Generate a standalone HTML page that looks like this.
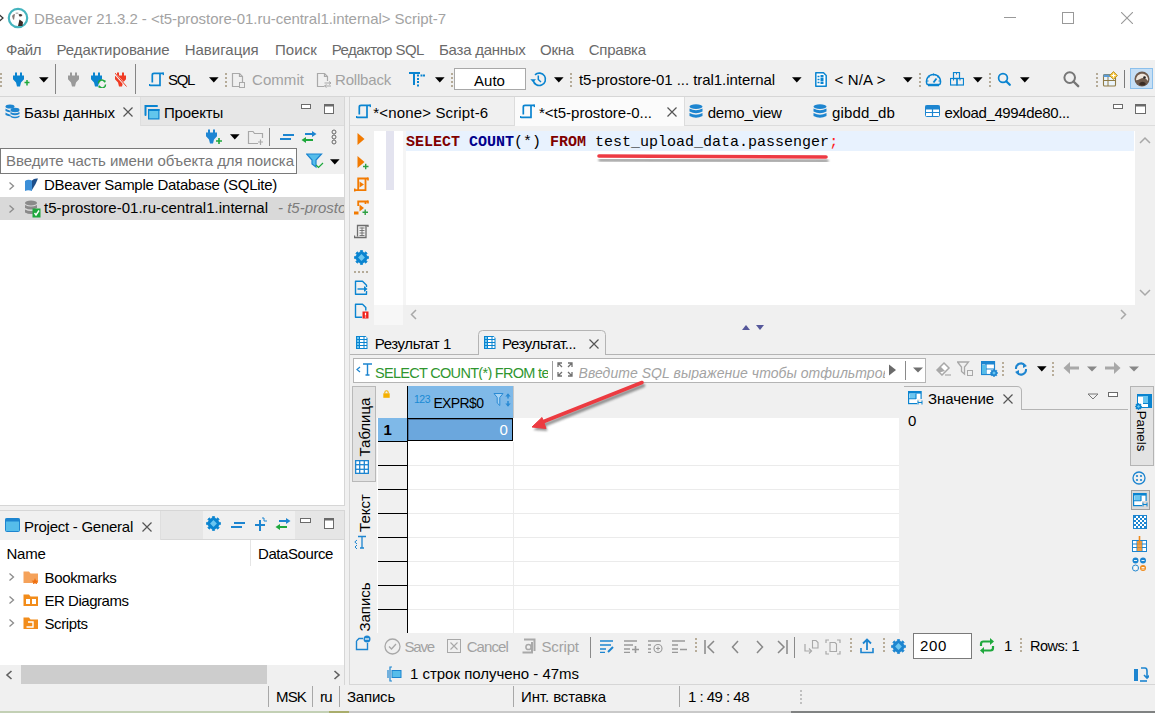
<!DOCTYPE html>
<html><head><meta charset="utf-8"><style>
html,body{margin:0;padding:0;}
body{width:1155px;height:713px;position:relative;overflow:hidden;background:#f0f0f0;font-family:"Liberation Sans",sans-serif;}
body>div,body>svg{position:absolute;}
.t{white-space:nowrap;}
</style></head><body>
<div style="left:0px;top:0px;width:1155px;height:60px;background:#ffffff;"></div>
<svg style="left:0px;top:13px;" width="4" height="10" viewBox="0 0 4 10"><path d="M-1 1.5L3 5L-1 8.5" stroke="#333" stroke-width="1.2" fill="none"/></svg>
<svg style="left:7px;top:7px;" width="22" height="22" viewBox="0 0 22 22"><circle cx="11" cy="11" r="9.2" fill="#ffffff" stroke="#45b4be" stroke-width="2.2"/><path d="M11 19L12.5 12.5L16 15L15.5 19Z" fill="#3a2a26"/><path d="M11.5 7.5Q13.5 6.5 15.5 8Q14.5 10 12.5 9.5Z" fill="#4a3a36"/><path d="M5 9Q6 7 8 7L7 13Q5.5 12 5 9Z" fill="#6a5a56" opacity="0.8"/><path d="M8 6Q10 5 12 6L10 7Z" fill="#777" opacity="0.7"/></svg>
<svg style="left:1004px;top:17px;" width="12" height="1" viewBox="0 0 12 1"><rect width="12" height="1" fill="#999"/></svg>
<svg style="left:1062px;top:12px;" width="12" height="12" viewBox="0 0 12 12"><rect x="0.5" y="0.5" width="11" height="11" fill="none" stroke="#999"/></svg>
<svg style="left:1121px;top:12px;" width="12" height="12" viewBox="0 0 12 12"><path d="M0 0L12 12M12 0L0 12" stroke="#999" stroke-width="1.1"/></svg>
<div style="left:0px;top:96px;width:1155px;height:1px;background:#dadada;"></div>
<svg style="left:0px;top:73px;" width="2" height="16" viewBox="0 0 2 16"><rect x="0" y="0" width="2" height="2" fill="#b5ab98"/><rect x="0" y="4" width="2" height="2" fill="#b5ab98"/><rect x="0" y="8" width="2" height="2" fill="#b5ab98"/><rect x="0" y="12" width="2" height="2" fill="#b5ab98"/></svg>
<svg style="left:13px;top:72px;" width="17" height="16" viewBox="0 0 17 16"><path d="M2 0.5H4V4H2ZM7 0.5H9V4H7Z" fill="#0a84d0"/><path d="M0 3.5H11V7.2L8 10.5L7 14.5H4L3 10.5L0 7.2Z" fill="#0a84d0"/><path d="M12 10.5H16M14 8.5V13M11.5 10.5H16.5M14 8V13.5" stroke="#1ea83c" stroke-width="1.5"/></svg>
<svg style="left:38.7px;top:77px;" width="10" height="6" viewBox="0 0 10 6"><path d="M0 0.3H9.6L4.8 5.5Z" fill="#000"/></svg>
<div style="left:55px;top:64px;width:1px;height:30px;background:#858585;"></div>
<svg style="left:68px;top:72px;" width="17" height="16" viewBox="0 0 17 16"><path d="M2 0.5H4V4H2ZM7 0.5H9V4H7Z" fill="#9a9a9a"/><path d="M0 3.5H11V7.2L8 10.5L7 14.5H4L3 10.5L0 7.2Z" fill="#9a9a9a"/></svg>
<svg style="left:90.5px;top:72px;" width="17" height="16" viewBox="0 0 17 16"><path d="M2 0.5H4V4H2ZM7 0.5H9V4H7Z" fill="#0a84d0"/><path d="M0 3.5H11V7.2L8 10.5L7 14.5H4L3 10.5L0 7.2Z" fill="#0a84d0"/><path d="M7.5 11.5A3.3 3.3 0 0 1 13.5 9.5" stroke="#1ea83c" stroke-width="1.4" fill="none"/><path d="M12 8L15 8.8L13.8 11Z" fill="#1ea83c"/><path d="M14.5 12.5A3.3 3.3 0 0 1 8.5 14.5" stroke="#1ea83c" stroke-width="1.4" fill="none"/><path d="M10 16L7 15.2L8.2 13Z" fill="#1ea83c"/></svg>
<svg style="left:115px;top:72px;" width="17" height="16" viewBox="0 0 17 16"><path d="M2 0.5H4V4H2ZM7 0.5H9V4H7Z" fill="#f03c24"/><path d="M0 3.5H11V7.2L8 10.5L7 14.5H4L3 10.5L0 7.2Z" fill="#f03c24"/><path d="M-1 1L12 15" stroke="#f0f0f0" stroke-width="2"/><path d="M-0.5 0.5L11.5 14.5" stroke="#f03c24" stroke-width="1"/></svg>
<div style="left:135px;top:64px;width:1px;height:30px;background:#858585;"></div>
<svg style="left:149px;top:72px;" width="15" height="15" viewBox="0 0 15 15"><path d="M3.3 10.5V3Q3.3 1.3 5 1.3H14.5" stroke="#0a84d0" stroke-width="1.7" fill="none"/><path d="M11 1.5V13.4H0.8" stroke="#0a84d0" stroke-width="1.7" fill="none"/><path d="M14 0.5L14.5 3M0.5 12V14" stroke="#0a84d0" stroke-width="1.36"/></svg>
<svg style="left:208.5px;top:77px;" width="10" height="6" viewBox="0 0 10 6"><path d="M0 0.3H9.6L4.8 5.5Z" fill="#000"/></svg>
<svg style="left:225px;top:73px;" width="2" height="16" viewBox="0 0 2 16"><rect x="0" y="0" width="2" height="2" fill="#b5ab98"/><rect x="0" y="4" width="2" height="2" fill="#b5ab98"/><rect x="0" y="8" width="2" height="2" fill="#b5ab98"/><rect x="0" y="12" width="2" height="2" fill="#b5ab98"/></svg>
<svg style="left:231px;top:72px;" width="16" height="16" viewBox="0 0 16 16"><path d="M1.5 1.5H8.5L11.5 4.5V14.5H1.5Z" fill="none" stroke="#a9a9a9" stroke-width="1.2"/><path d="M8.5 1.5V4.5H11.5" fill="none" stroke="#a9a9a9" stroke-width="1.2"/><rect x="8.5" y="10.5" width="5" height="5" fill="#f0f0f0" stroke="#a9a9a9"/></svg>
<svg style="left:316px;top:72px;" width="16" height="16" viewBox="0 0 16 16"><path d="M1.5 1.5H8.5L11.5 4.5V14.5H1.5Z" fill="none" stroke="#a9a9a9" stroke-width="1.2"/><path d="M8.5 1.5V4.5H11.5" fill="none" stroke="#a9a9a9" stroke-width="1.2"/><rect x="8" y="9" width="8" height="7" fill="#f0f0f0"/><path d="M8.5 11H15M13 9.5L15 11L13 12.5M15 14H8.5M10.5 12.5L8.5 14L10.5 15.5" stroke="#a9a9a9" stroke-width="1" fill="none"/></svg>
<svg style="left:408px;top:71px;" width="17" height="17" viewBox="0 0 17 17"><path d="M1 2H12M6 2V14" stroke="#0a84d0" stroke-width="2"/><rect x="9" y="3.5" width="2" height="2" fill="#0a84d0"/><rect x="12.5" y="3.5" width="2" height="2" fill="#0a84d0"/><rect x="15" y="3.5" width="2" height="2" fill="#0a84d0"/><rect x="9" y="7" width="2" height="2" fill="#0a84d0"/><rect x="9" y="10" width="2" height="2" fill="#0a84d0"/><rect x="9" y="13.5" width="2" height="2" fill="#0a84d0"/></svg>
<svg style="left:435px;top:77px;" width="10" height="6" viewBox="0 0 10 6"><path d="M0 0.3H9.6L4.8 5.5Z" fill="#000"/></svg>
<svg style="left:451px;top:73px;" width="2" height="16" viewBox="0 0 2 16"><rect x="0" y="0" width="2" height="2" fill="#b5ab98"/><rect x="0" y="4" width="2" height="2" fill="#b5ab98"/><rect x="0" y="8" width="2" height="2" fill="#b5ab98"/><rect x="0" y="12" width="2" height="2" fill="#b5ab98"/></svg>
<div style="left:454px;top:68px;width:72px;height:22px;box-sizing:border-box;border:1px solid #a8a8a8;background:#ffffff;"></div>
<svg style="left:530px;top:71px;" width="17" height="17" viewBox="0 0 17 17"><path d="M3.2 9.5A6.2 6.2 0 1 0 5 3.8" stroke="#0a84d0" stroke-width="1.6" fill="none"/><path d="M0.3 8.3H6L3.2 11.3Z" fill="#0a84d0"/><path d="M8.3 4.5V8.5L11 11" stroke="#0a84d0" stroke-width="1.5" fill="none"/></svg>
<svg style="left:554px;top:77px;" width="10" height="6" viewBox="0 0 10 6"><path d="M0 0.3H9.6L4.8 5.5Z" fill="#000"/></svg>
<svg style="left:570px;top:73px;" width="2" height="16" viewBox="0 0 2 16"><rect x="0" y="0" width="2" height="2" fill="#b5ab98"/><rect x="0" y="4" width="2" height="2" fill="#b5ab98"/><rect x="0" y="8" width="2" height="2" fill="#b5ab98"/><rect x="0" y="12" width="2" height="2" fill="#b5ab98"/></svg>
<svg style="left:792px;top:77px;" width="10" height="6" viewBox="0 0 10 6"><path d="M0 0.3H9.6L4.8 5.5Z" fill="#000"/></svg>
<svg style="left:814px;top:71px;" width="14" height="17" viewBox="0 0 14 17"><path d="M1.8 1.8H9.5L12.2 4.5V15.2H1.8Z" fill="#fff" stroke="#0a84d0" stroke-width="1.5" stroke-linejoin="round"/><path d="M3.5 5.5H5.5M3.5 8.5H5.5M3.5 11.5H5.5" stroke="#0a84d0" stroke-width="1.3"/><rect x="6.5" y="4" width="3" height="2.5" fill="#0a84d0"/><rect x="6.5" y="7" width="3" height="3" fill="#0a84d0"/><rect x="6.5" y="10.5" width="3" height="2.5" fill="#0a84d0"/></svg>
<svg style="left:903px;top:77px;" width="10" height="6" viewBox="0 0 10 6"><path d="M0 0.3H9.6L4.8 5.5Z" fill="#000"/></svg>
<svg style="left:919px;top:73px;" width="2" height="16" viewBox="0 0 2 16"><rect x="0" y="0" width="2" height="2" fill="#b5ab98"/><rect x="0" y="4" width="2" height="2" fill="#b5ab98"/><rect x="0" y="8" width="2" height="2" fill="#b5ab98"/><rect x="0" y="12" width="2" height="2" fill="#b5ab98"/></svg>
<svg style="left:925px;top:72px;" width="17" height="15" viewBox="0 0 17 15"><path d="M2.2 12.5A7 7 0 1 1 14.8 12.5Z" fill="none" stroke="#0a84d0" stroke-width="1.5" stroke-linejoin="round"/><path d="M3 13.5H14" stroke="#0a84d0" stroke-width="1.5"/><path d="M8.5 10.5L11.5 6.5" stroke="#0a84d0" stroke-width="1.8"/><path d="M8.5 1.5V3.5M3.5 4L4.8 5.2M13.5 4L12.2 5.2M1.8 9H3.5M15.2 9H13.5" stroke="#0a84d0" stroke-width="1"/></svg>
<svg style="left:950px;top:72px;" width="14" height="14" viewBox="0 0 14 14"><rect x="3.5" y="0.5" width="6" height="6" fill="none" stroke="#0a84d0" stroke-width="1.2"/><rect x="0.5" y="6.5" width="6.5" height="6.5" fill="none" stroke="#0a84d0" stroke-width="1.2"/><rect x="7" y="6.5" width="6.5" height="6.5" fill="none" stroke="#0a84d0" stroke-width="1.2"/><path d="M6.5 0.5V2.5M3.5 6.5V8.5M10 6.5V8.5" stroke="#0a84d0" stroke-width="1"/></svg>
<svg style="left:972.8px;top:77px;" width="10" height="6" viewBox="0 0 10 6"><path d="M0 0.3H9.6L4.8 5.5Z" fill="#000"/></svg>
<svg style="left:989px;top:73px;" width="2" height="16" viewBox="0 0 2 16"><rect x="0" y="0" width="2" height="2" fill="#b5ab98"/><rect x="0" y="4" width="2" height="2" fill="#b5ab98"/><rect x="0" y="8" width="2" height="2" fill="#b5ab98"/><rect x="0" y="12" width="2" height="2" fill="#b5ab98"/></svg>
<svg style="left:997px;top:72px;" width="14" height="15" viewBox="0 0 14 15"><circle cx="6" cy="6" r="4.4" fill="none" stroke="#0a84d0" stroke-width="1.7"/><path d="M9.2 9.2L12.8 12.8" stroke="#0a84d0" stroke-width="2.2" stroke-linecap="round"/></svg>
<svg style="left:1020px;top:77px;" width="10" height="6" viewBox="0 0 10 6"><path d="M0 0.3H9.6L4.8 5.5Z" fill="#000"/></svg>
<svg style="left:1062px;top:70px;" width="18" height="18" viewBox="0 0 18 18"><circle cx="7.7" cy="7.6" r="5.3" fill="none" stroke="#767676" stroke-width="2"/><path d="M11.5 11.5L16.2 16.2" stroke="#767676" stroke-width="2.4" stroke-linecap="round"/></svg>
<svg style="left:1096px;top:73px;" width="2" height="16" viewBox="0 0 2 16"><rect x="0" y="0" width="2" height="2" fill="#b5ab98"/><rect x="0" y="4" width="2" height="2" fill="#b5ab98"/><rect x="0" y="8" width="2" height="2" fill="#b5ab98"/><rect x="0" y="12" width="2" height="2" fill="#b5ab98"/></svg>
<svg style="left:1102px;top:71px;" width="17" height="16" viewBox="0 0 17 16"><rect x="1.5" y="3.5" width="12" height="11.5" rx="1" fill="#eaf4fb" stroke="#8f7b46" stroke-width="1.1"/><rect x="1.5" y="3.5" width="12" height="2.5" fill="#5b9bd5"/><path d="M1.5 9.5H13.5M6 6V15" stroke="#8f7b46" stroke-width="1"/><path d="M11.5 0.5L15.5 4.5L11.5 8.5L7.5 4.5Z" fill="#f6c53f" stroke="#b08a1e" stroke-width="0.8"/><path d="M11.5 2.5V6.5M9.5 4.5H13.5" stroke="#fff" stroke-width="1"/></svg>
<div style="left:1124px;top:70px;width:1px;height:18px;background:#7a7a7a;"></div>
<div style="left:1130px;top:68px;width:23px;height:21px;box-sizing:border-box;border:1px solid #8cc0ec;background:#c6dff5;"></div>
<svg style="left:1134px;top:71px;" width="16" height="16" viewBox="0 0 16 16"><circle cx="8" cy="8" r="7.5" fill="#6d5a4c"/><path d="M2 9C2.5 4 6 2 10 3C13 4 14.5 7 14 10C12 7 9 6 6 8C4.5 9 3 9.5 2 9Z" fill="#efe6dc"/><path d="M5 13C7 10 10 10 12 13C10 15 7 15 5 13Z" fill="#3a2c24"/><circle cx="10.5" cy="6.5" r="1.3" fill="#222"/></svg>
<div style="left:0px;top:97px;width:344px;height:29px;background:#e6e6e6;"></div>
<div style="left:140px;top:125px;width:204px;height:1px;background:#dcdcdc;"></div>
<div style="left:140px;top:97px;width:1px;height:29px;background:#dedede;"></div>
<div style="left:0px;top:97px;width:140px;height:29px;background:#f0f0f0;"></div>
<div style="left:0px;top:126px;width:344px;height:48px;background:#f0f0f0;"></div>
<div style="left:344px;top:96px;width:1px;height:410px;background:#d6d6d6;"></div>
<div style="left:0px;top:96px;width:345px;height:1px;background:#d6d6d6;"></div>
<svg style="left:5px;top:104px;" width="15" height="15" viewBox="0 0 15 15"><g fill="#1d85d0"><ellipse cx="5" cy="2.5" rx="4.5" ry="2"/><ellipse cx="10" cy="6" rx="4.5" ry="2.2"/><path d="M0.5 4.5Q5 7 5.5 6.5V8Q5 9 0.5 7Z"/><path d="M0.5 8.5Q5 11 5.5 10.5V12Q5 13 0.5 11Z"/><path d="M5.5 8Q10 10.5 14.5 8V10Q10 12.5 5.5 10Z"/><path d="M5.5 11.5Q10 14 14.5 11.5V13Q10 15.5 5.5 13Z"/></g></svg>
<svg style="left:123px;top:107px;" width="10" height="10" viewBox="0 0 10 10"><path d="M0.5 0.5L9.5 9.5M9.5 0.5L0.5 9.5" stroke="#555" stroke-width="1.2"/></svg>
<svg style="left:144px;top:104px;" width="16" height="16" viewBox="0 0 16 16"><path d="M1.5 11V2H13" stroke="#0a84d0" stroke-width="2" fill="none" stroke-linecap="round"/><rect x="4.6" y="5.6" width="10.3" height="9.3" fill="#62c6ec" stroke="#0a84d0" stroke-width="1.2"/><rect x="4" y="5" width="11.5" height="2" fill="#0a84d0"/></svg>
<svg style="left:301px;top:104px;" width="10" height="5" viewBox="0 0 10 5"><rect x="0.5" y="0.5" width="9" height="4" fill="#fff" stroke="#6b6b6b"/></svg>
<svg style="left:324px;top:104px;" width="10" height="10" viewBox="0 0 10 10"><rect x="0.5" y="0.5" width="9" height="9" fill="#fff" stroke="#6b6b6b"/><rect x="0.5" y="0.5" width="9" height="2" fill="#6b6b6b"/></svg>
<svg style="left:206px;top:129px;" width="17" height="16" viewBox="0 0 17 16"><path d="M2 0.5H4V4H2ZM7 0.5H9V4H7Z" fill="#1f86d3"/><path d="M0 3.5H11V7.2L8 10.5L7 14.5H4L3 10.5L0 7.2Z" fill="#1f86d3"/><path d="M10 12H16M13 9V15" stroke="#1ea83c" stroke-width="1.6"/></svg>
<svg style="left:229.5px;top:134px;" width="10" height="6" viewBox="0 0 10 6"><path d="M0 0.3H9.6L4.8 5.5Z" fill="#000"/></svg>
<svg style="left:247px;top:130px;" width="17" height="15" viewBox="0 0 17 15"><path d="M1.5 3V13.5H11M1.5 3V1.5H6L7.5 3.5H15.5V8" fill="none" stroke="#a8a8a8" stroke-width="1.2"/><path d="M11 12H16M13.5 9.5V15" stroke="#a8a8a8" stroke-width="1.2"/></svg>
<div style="left:269px;top:128px;width:1px;height:18px;background:#8a8a8a;"></div>
<svg style="left:280px;top:134px;" width="14" height="6" viewBox="0 0 14 6"><path d="M3 1H14M0 5H11" stroke="#1d85d0" stroke-width="1.8"/></svg>
<svg style="left:301px;top:131px;" width="16" height="12" viewBox="0 0 16 12"><path d="M4 3H14" stroke="#1d85d0" stroke-width="2"/><path d="M11 0L15.5 3L11 6Z" fill="#1d85d0"/><path d="M2 9H12" stroke="#1ea83c" stroke-width="2"/><path d="M5 6L0.5 9L5 12Z" fill="#1ea83c"/></svg>
<svg style="left:331px;top:129px;" width="6" height="16" viewBox="0 0 6 16"><circle cx="3" cy="3" r="2" fill="none" stroke="#666" stroke-width="1"/><circle cx="3" cy="8" r="2" fill="none" stroke="#666" stroke-width="1"/><circle cx="3" cy="13" r="2" fill="none" stroke="#666" stroke-width="1"/></svg>
<div style="left:0px;top:148px;width:297px;height:26px;box-sizing:border-box;border:1px solid #7a7a7a;background:#ffffff;"></div>
<svg style="left:306px;top:153px;" width="18" height="16" viewBox="0 0 18 16"><path d="M0.5 1H15.5L10 7V14L6 11V7Z" fill="#56bdea" stroke="#1d85d0" stroke-width="1.2"/><path d="M10 12L12.5 14.5L17 10" stroke="#1ea83c" stroke-width="1.2" fill="none"/></svg>
<svg style="left:330px;top:159px;" width="10" height="6" viewBox="0 0 10 6"><path d="M0 0.3H9.6L4.8 5.5Z" fill="#000"/></svg>
<div style="left:0px;top:174px;width:344px;height:331px;background:#ffffff;"></div>
<div style="left:0px;top:197px;width:344px;height:23px;background:#d9d9d9;"></div>
<svg style="left:8px;top:181px;" width="7" height="10" viewBox="0 0 7 10"><path d="M1.5 1.5L5.5 5L1.5 8.5" stroke="#8c8c8c" stroke-width="1.3" fill="none"/></svg>
<svg style="left:24px;top:178px;" width="15" height="14" viewBox="0 0 15 14"><path d="M1 3Q4 1 8 2.5V13Q4 11.5 1 13Z" fill="#3c8fd8"/><path d="M8 2.5Q10 0 14 0.5Q12 6 8 12Z" fill="#1e4f8a"/></svg>
<svg style="left:8px;top:204px;" width="7" height="10" viewBox="0 0 7 10"><path d="M1.5 1.5L5.5 5L1.5 8.5" stroke="#8c8c8c" stroke-width="1.3" fill="none"/></svg>
<svg style="left:24px;top:200px;" width="17" height="18" viewBox="0 0 17 18"><g fill="#8a8a8a"><ellipse cx="7" cy="3" rx="6" ry="2.5"/><path d="M1 5Q7 8 13 5V8Q7 11 1 8Z"/><path d="M1 9.5Q7 12.5 13 9.5V12.5Q7 15.5 1 12.5Z"/></g><rect x="8.5" y="8.5" width="8" height="9" fill="#1ea83c"/><path d="M10.5 13L12 15L15 10.5" stroke="#fff" stroke-width="1.4" fill="none"/></svg>
<div style="left:0px;top:505px;width:345px;height:1px;background:#d6d6d6;"></div>
<div style="left:0px;top:510px;width:345px;height:1px;background:#d6d6d6;"></div>
<div style="left:344px;top:510px;width:1px;height:175px;background:#d6d6d6;"></div>
<div style="left:0px;top:511px;width:344px;height:29px;background:#e6e6e6;"></div>
<div style="left:0px;top:511px;width:160px;height:29px;background:#f0f0f0;"></div>
<div style="left:203px;top:511px;width:92px;height:29px;background:#f0f0f0;"></div>
<div style="left:160px;top:539px;width:184px;height:1px;background:#d8d8d8;"></div>
<div style="left:160px;top:511px;width:1px;height:29px;background:#dedede;"></div>
<svg style="left:5px;top:518px;" width="15" height="14" viewBox="0 0 15 14"><rect x="0.5" y="0.5" width="14" height="13" rx="1" fill="#56bdea" stroke="#1d85d0" stroke-width="1"/><rect x="0.5" y="0.5" width="14" height="3" fill="#1d85d0"/></svg>
<svg style="left:142px;top:522px;" width="10" height="10" viewBox="0 0 10 10"><path d="M0.5 0.5L9.5 9.5M9.5 0.5L0.5 9.5" stroke="#555" stroke-width="1.2"/></svg>
<svg style="left:206px;top:515.5px;" width="15" height="15" viewBox="0 0 15 15"><polygon points="12.75,6.24 14.47,6.45 14.47,8.55 12.75,8.76 12.10,10.32 13.17,11.69 11.69,13.17 10.32,12.10 8.76,12.75 8.55,14.47 6.45,14.47 6.24,12.75 4.68,12.10 3.31,13.17 1.83,11.69 2.90,10.32 2.25,8.76 0.53,8.55 0.53,6.45 2.25,6.24 2.90,4.68 1.83,3.31 3.31,1.83 4.68,2.90 6.24,2.25 6.45,0.53 8.55,0.53 8.76,2.25 10.32,2.90 11.69,1.83 13.17,3.31 12.10,4.68" fill="#0a84d0" stroke="#0a84d0" stroke-width="0.75" stroke-linejoin="round"/><circle cx="7.5" cy="7.5" r="5.29" fill="#0a84d0"/><rect x="5.10" y="5.10" width="4.80" height="4.80" fill="#6cc6f0" transform="rotate(45 7.5 7.5)"/></svg>
<svg style="left:231px;top:522px;" width="14" height="6" viewBox="0 0 14 6"><path d="M3 1H14M0 5H11" stroke="#1d85d0" stroke-width="1.8"/></svg>
<svg style="left:255px;top:517px;" width="13" height="14" viewBox="0 0 13 14"><path d="M0 8H10M5 3V14" stroke="#1d85d0" stroke-width="2"/><path d="M7 1H9V4H12" stroke="#1d85d0" stroke-width="1" fill="none"/></svg>
<svg style="left:275px;top:518px;" width="16" height="12" viewBox="0 0 16 12"><path d="M4 3H14" stroke="#1d85d0" stroke-width="2"/><path d="M11 0L15.5 3L11 6Z" fill="#1d85d0"/><path d="M2 9H12" stroke="#1ea83c" stroke-width="2"/><path d="M5 6L0.5 9L5 12Z" fill="#1ea83c"/></svg>
<svg style="left:300px;top:518px;" width="11" height="5" viewBox="0 0 11 5"><rect x="0.5" y="0.5" width="10" height="4" fill="#fff" stroke="#6b6b6b"/></svg>
<svg style="left:324px;top:518px;" width="10" height="11" viewBox="0 0 10 11"><rect x="0.5" y="0.5" width="9" height="10" fill="#fff" stroke="#6b6b6b"/><rect x="0.5" y="0.5" width="9" height="2" fill="#6b6b6b"/></svg>
<div style="left:0px;top:540px;width:344px;height:125px;background:#ffffff;"></div>
<div style="left:250px;top:540px;width:1px;height:26px;background:#e5e5e5;"></div>
<svg style="left:8px;top:572px;" width="7" height="10" viewBox="0 0 7 10"><path d="M1.5 1.5L5.5 5L1.5 8.5" stroke="#8c8c8c" stroke-width="1.3" fill="none"/></svg>
<svg style="left:23px;top:570px;" width="16" height="14" viewBox="0 0 16 14"><path d="M0.5 1.5H6L7.5 3.5H15V13H0.5Z" fill="#f5a25a"/><path d="M12 8L13 10.5L15.5 10.7L13.6 12.2L14.2 14.5L12 13.2L9.8 14.5L10.4 12.2L8.5 10.7L11 10.5Z" fill="#f07010"/></svg>
<svg style="left:8px;top:595px;" width="7" height="10" viewBox="0 0 7 10"><path d="M1.5 1.5L5.5 5L1.5 8.5" stroke="#8c8c8c" stroke-width="1.3" fill="none"/></svg>
<svg style="left:23px;top:593px;" width="16" height="14" viewBox="0 0 16 14"><path d="M0.5 1.5H6L7.5 3.5H15V13H0.5Z" fill="#f28c1a"/><rect x="3" y="6" width="4" height="5" fill="#fff"/><rect x="9" y="6" width="4" height="5" fill="#fff"/></svg>
<svg style="left:8px;top:618px;" width="7" height="10" viewBox="0 0 7 10"><path d="M1.5 1.5L5.5 5L1.5 8.5" stroke="#8c8c8c" stroke-width="1.3" fill="none"/></svg>
<svg style="left:23px;top:616px;" width="16" height="14" viewBox="0 0 16 14"><path d="M0.5 1.5H6L7.5 3.5H15V13H0.5Z" fill="#f28c1a"/><path d="M5 6H10V11H3.5" stroke="#fff" stroke-width="1.4" fill="none"/></svg>
<div style="left:0px;top:665px;width:344px;height:19px;background:#f0f0f0;"></div>
<div style="left:21px;top:665px;width:246px;height:19px;background:#cdcdcd;"></div>
<svg style="left:5px;top:670px;" width="8" height="10" viewBox="0 0 8 10"><path d="M6.5 1L2 5L6.5 9" stroke="#606060" stroke-width="1.6" fill="none"/></svg>
<svg style="left:333px;top:670px;" width="8" height="10" viewBox="0 0 8 10"><path d="M1.5 1L6 5L1.5 9" stroke="#606060" stroke-width="1.6" fill="none"/></svg>
<div style="left:349px;top:96px;width:806px;height:1px;background:#d6d6d6;"></div>
<div style="left:349px;top:96px;width:1px;height:589px;background:#d6d6d6;"></div>
<div style="left:350px;top:97px;width:805px;height:28px;background:#f0f0f0;"></div>
<div style="left:350px;top:125px;width:805px;height:1px;background:#dcdcdc;"></div>
<div style="left:515px;top:97px;width:170px;height:29px;background:#fbfbfb;"></div>
<div style="left:514px;top:97px;width:1px;height:29px;background:#dcdcdc;"></div>
<div style="left:684px;top:97px;width:1px;height:29px;background:#dcdcdc;"></div>
<svg style="left:356px;top:104px;" width="15" height="15" viewBox="0 0 15 15"><path d="M3.3 10.5V3Q3.3 1.3 5 1.3H14.5" stroke="#0a84d0" stroke-width="1.7" fill="none"/><path d="M11 1.5V13.4H0.8" stroke="#0a84d0" stroke-width="1.7" fill="none"/><path d="M14 0.5L14.5 3M0.5 12V14" stroke="#0a84d0" stroke-width="1.36"/></svg>
<svg style="left:520px;top:104px;" width="15" height="15" viewBox="0 0 15 15"><path d="M3.3 10.5V3Q3.3 1.3 5 1.3H14.5" stroke="#0a84d0" stroke-width="1.7" fill="none"/><path d="M11 1.5V13.4H0.8" stroke="#0a84d0" stroke-width="1.7" fill="none"/><path d="M14 0.5L14.5 3M0.5 12V14" stroke="#0a84d0" stroke-width="1.36"/></svg>
<svg style="left:667px;top:107px;" width="10" height="10" viewBox="0 0 10 10"><path d="M0.5 0.5L9.5 9.5M9.5 0.5L0.5 9.5" stroke="#555" stroke-width="1.2"/></svg>
<svg style="left:689px;top:104px;" width="14" height="15" viewBox="0 0 14 15"><g fill="#1d85d0"><ellipse cx="7" cy="2.6" rx="6.5" ry="2.4"/><path d="M0.5 4.5Q7 8 13.5 4.5V7.5Q7 11 0.5 7.5Z"/><path d="M0.5 9Q7 12.5 13.5 9V12Q7 15.5 0.5 12Z"/></g></svg>
<svg style="left:813px;top:104px;" width="14" height="15" viewBox="0 0 14 15"><g fill="#1d85d0"><ellipse cx="7" cy="2.6" rx="6.5" ry="2.4"/><path d="M0.5 4.5Q7 8 13.5 4.5V7.5Q7 11 0.5 7.5Z"/><path d="M0.5 9Q7 12.5 13.5 9V12Q7 15.5 0.5 12Z"/></g></svg>
<svg style="left:925px;top:105px;" width="15" height="12" viewBox="0 0 15 12"><rect x="0.5" y="0.5" width="14" height="11" rx="1" fill="#fff" stroke="#1d85d0" stroke-width="1"/><rect x="0.5" y="0.5" width="14" height="4" fill="#1d85d0"/><path d="M7.5 4V11M1 7.5H14" stroke="#1d85d0" stroke-width="1.2"/></svg>
<svg style="left:1113px;top:104px;" width="10" height="5" viewBox="0 0 10 5"><rect x="0.5" y="0.5" width="9" height="4" fill="#fff" stroke="#6b6b6b"/></svg>
<svg style="left:1135px;top:104px;" width="11" height="10" viewBox="0 0 11 10"><rect x="0.5" y="0.5" width="10" height="9" fill="#fff" stroke="#6b6b6b"/><rect x="0.5" y="0.5" width="10" height="2" fill="#6b6b6b"/></svg>
<div style="left:350px;top:126px;width:24px;height:205px;background:#f0f0f0;"></div>
<div style="left:350px;top:126px;width:805px;height:5px;background:#f0f0f0;"></div>
<div style="left:374px;top:131px;width:761px;height:174px;background:#ffffff;"></div>
<div style="left:386px;top:131px;width:8px;height:59px;background:#e3e3ef;"></div>
<div style="left:403px;top:131px;width:3px;height:174px;background:#f5f5f5;"></div>
<div style="left:406px;top:131px;width:728px;height:20px;background:#e8f2fe;"></div>
<div style="left:1135px;top:126px;width:20px;height:179px;background:#f0f0f0;"></div>
<div style="left:374px;top:305px;width:29px;height:20px;background:#f7f7f7;"></div>
<svg style="left:1139px;top:136px;" width="12" height="8" viewBox="0 0 12 8"><path d="M1 7L6 2L11 7" stroke="#a8a8a8" stroke-width="1.5" fill="none"/></svg>
<svg style="left:1139px;top:289px;" width="12" height="8" viewBox="0 0 12 8"><path d="M1 1L6 6L11 1" stroke="#a8a8a8" stroke-width="1.5" fill="none"/></svg>
<svg style="left:410px;top:309px;" width="8" height="11" viewBox="0 0 8 11"><path d="M6 1L1.5 5.5L6 10" stroke="#a8a8a8" stroke-width="1.5" fill="none"/></svg>
<svg style="left:1119px;top:309px;" width="8" height="11" viewBox="0 0 8 11"><path d="M2 1L6.5 5.5L2 10" stroke="#a8a8a8" stroke-width="1.5" fill="none"/></svg>
<div class="t" style="left:406px;top:135px;font-family:'Liberation Mono';font-size:15px;line-height:15px;color:#000"><b style="color:#800000">SELECT</b> <b style="color:#00008b">COUNT</b>(*) <b style="color:#800000">FROM</b> test_upload_data.passenger<span style="color:#ff2020">;</span></div>
<svg style="left:592px;top:149px;" width="242" height="16" viewBox="0 0 242 16"><defs><filter id="blr2" x="-10%" y="-100%" width="120%" height="300%"><feGaussianBlur stdDeviation="1.2"/></filter></defs><path d="M7 8.5Q120 9.5 234 9.5" stroke="#444" stroke-width="3.5" stroke-linecap="round" fill="none" opacity="0.5" filter="url(#blr2)" transform="translate(1,2.5)"/><path d="M7 7Q120 8 234 8" stroke="#ee3a43" stroke-width="3.6" stroke-linecap="round" fill="none"/></svg>
<svg style="left:357px;top:133px;" width="8" height="12" viewBox="0 0 8 12"><path d="M0.5 0L7.5 6L0.5 12Z" fill="#f27a00"/></svg>
<svg style="left:357px;top:156px;" width="12" height="14" viewBox="0 0 12 14"><path d="M0.5 0L7.5 6L0.5 12Z" fill="#f27a00"/><path d="M6 10.5H11.5M8.7 7.7V13.3" stroke="#2ea043" stroke-width="1.4"/></svg>
<svg style="left:354px;top:177px;" width="15" height="15" viewBox="0 0 15 15"><path d="M4.2 13V1.5H14" stroke="#f27a00" stroke-width="1.8" fill="none"/><path d="M11.5 1.5V13.2H0.5" stroke="#f27a00" stroke-width="1.8" fill="none"/><path d="M14 0.5V3.5M0.7 11.5V14.5" stroke="#f27a00" stroke-width="1.6"/><path d="M5.5 4.5L10 7.5L5.5 10.5Z" fill="#f27a00"/></svg>
<svg style="left:354px;top:200px;" width="15" height="16" viewBox="0 0 15 16"><path d="M4.2 6V1.5H14" stroke="#f27a00" stroke-width="1.8" fill="none"/><path d="M11.5 1.5V4" stroke="#f27a00" stroke-width="1.8" fill="none"/><path d="M14 0.5V3.5" stroke="#f27a00" stroke-width="1.6"/><rect x="0" y="11.5" width="4.5" height="3" fill="#f27a00"/><path d="M5.5 4.5L10 8L5.5 11.5Z" fill="#f27a00"/><path d="M8.5 12.3H14M11.2 9.5V15" stroke="#2ea043" stroke-width="1.4"/></svg>
<svg style="left:354px;top:224px;" width="15" height="15" viewBox="0 0 15 15"><path d="M3.5 12.5V1.5H14V3" stroke="#6e6e6e" stroke-width="1.3" fill="none"/><path d="M12 1.5V13.5H0.5V11.5" stroke="#6e6e6e" stroke-width="1.3" fill="none"/><path d="M5.5 4H10.5M5.5 6.5H10.5M5.5 9H10.5M5.5 11.5H10.5M8 3.5V12" stroke="#6e6e6e" stroke-width="0.9"/></svg>
<svg style="left:354px;top:249.5px;" width="15" height="15" viewBox="0 0 15 15"><polygon points="12.75,6.24 14.47,6.45 14.47,8.55 12.75,8.76 12.10,10.32 13.17,11.69 11.69,13.17 10.32,12.10 8.76,12.75 8.55,14.47 6.45,14.47 6.24,12.75 4.68,12.10 3.31,13.17 1.83,11.69 2.90,10.32 2.25,8.76 0.53,8.55 0.53,6.45 2.25,6.24 2.90,4.68 1.83,3.31 3.31,1.83 4.68,2.90 6.24,2.25 6.45,0.53 8.55,0.53 8.76,2.25 10.32,2.90 11.69,1.83 13.17,3.31 12.10,4.68" fill="#0a84d0" stroke="#0a84d0" stroke-width="0.75" stroke-linejoin="round"/><circle cx="7.5" cy="7.5" r="5.29" fill="#0a84d0"/><rect x="5.10" y="5.10" width="4.80" height="4.80" fill="#6cc6f0" transform="rotate(45 7.5 7.5)"/></svg>
<svg style="left:354px;top:271px;" width="15" height="2" viewBox="0 0 15 2"><rect x="0" y="0" width="2" height="2" fill="#b5ab98"/><rect x="4" y="0" width="2" height="2" fill="#b5ab98"/><rect x="8" y="0" width="2" height="2" fill="#b5ab98"/><rect x="12" y="0" width="2" height="2" fill="#b5ab98"/></svg>
<svg style="left:354px;top:280px;" width="15" height="16" viewBox="0 0 15 16"><path d="M12.5 7V5.2L8.5 1.2H1.5V14.3H12.5V11" fill="none" stroke="#0a84d0" stroke-width="1.4" stroke-linejoin="round"/><path d="M3.5 9H12" stroke="#0a84d0" stroke-width="1.4"/><path d="M10 6L13.5 9L10 12Z" fill="#0a84d0"/></svg>
<svg style="left:354px;top:303px;" width="15" height="16" viewBox="0 0 15 16"><path d="M8 14.3H1.5V1.2H8.5L11.8 4.5V7.5" fill="none" stroke="#0a84d0" stroke-width="1.4" stroke-linejoin="round"/><rect x="8.5" y="8.5" width="6" height="7" fill="#f0201a"/><path d="M11.5 9.8V12.5M11.5 13.5V14.5" stroke="#fff" stroke-width="1.3"/></svg>
<svg style="left:742px;top:325px;" width="8" height="5" viewBox="0 0 8 5"><path d="M0 5L4 0L8 5Z" fill="#55579a"/></svg>
<svg style="left:756px;top:325px;" width="8" height="5" viewBox="0 0 8 5"><path d="M0 0H8L4 5Z" fill="#55579a"/></svg>
<svg style="left:356px;top:336px;" width="12" height="14" viewBox="0 0 12 14"><path d="M0 0H9.5L11.5 2V13H0Z" fill="#0a84d0"/><rect x="1" y="1" width="2" height="2" fill="#6cc6f0"/><rect x="4" y="1" width="3.5" height="2" fill="#fff"/><rect x="8.5" y="1" width="2" height="2" fill="#fff"/><rect x="1" y="4" width="2" height="2" fill="#6cc6f0"/><rect x="4" y="4" width="3.5" height="2" fill="#fff"/><rect x="8.5" y="4" width="2" height="2" fill="#fff"/><rect x="1" y="7" width="2" height="2" fill="#6cc6f0"/><rect x="4" y="7" width="3.5" height="2" fill="#fff"/><rect x="8.5" y="7" width="2" height="2" fill="#fff"/><rect x="1" y="10" width="2" height="2" fill="#6cc6f0"/><rect x="4" y="10" width="3.5" height="2" fill="#fff"/><rect x="8.5" y="10" width="2" height="2" fill="#fff"/></svg>
<svg style="left:477px;top:329px;" width="130" height="26" viewBox="0 0 130 26"><path d="M1.5 26V5.5Q1.5 1.5 5.5 1.5H124.5Q128.5 1.5 128.5 5.5V26" fill="#f0f0f0" stroke="#b4b4b4" stroke-width="1"/></svg>
<svg style="left:484px;top:336px;" width="12" height="14" viewBox="0 0 12 14"><path d="M0 0H9.5L11.5 2V13H0Z" fill="#0a84d0"/><rect x="1" y="1" width="2" height="2" fill="#6cc6f0"/><rect x="4" y="1" width="3.5" height="2" fill="#fff"/><rect x="8.5" y="1" width="2" height="2" fill="#fff"/><rect x="1" y="4" width="2" height="2" fill="#6cc6f0"/><rect x="4" y="4" width="3.5" height="2" fill="#fff"/><rect x="8.5" y="4" width="2" height="2" fill="#fff"/><rect x="1" y="7" width="2" height="2" fill="#6cc6f0"/><rect x="4" y="7" width="3.5" height="2" fill="#fff"/><rect x="8.5" y="7" width="2" height="2" fill="#fff"/><rect x="1" y="10" width="2" height="2" fill="#6cc6f0"/><rect x="4" y="10" width="3.5" height="2" fill="#fff"/><rect x="8.5" y="10" width="2" height="2" fill="#fff"/></svg>
<svg style="left:589px;top:339px;" width="10" height="10" viewBox="0 0 10 10"><path d="M0.5 0.5L9.5 9.5M9.5 0.5L0.5 9.5" stroke="#555" stroke-width="1.2"/></svg>
<div style="left:350px;top:354px;width:128px;height:1px;background:#b4b4b4;"></div>
<div style="left:606px;top:354px;width:549px;height:1px;background:#b4b4b4;"></div>
<div style="left:353px;top:358px;width:573px;height:25px;box-sizing:border-box;border:1px solid #b4b4b4;background:#ffffff;"></div>
<svg style="left:356px;top:362px;" width="17" height="14" viewBox="0 0 17 14"><path d="M4 5L1 7.5L4 10" stroke="#1d85d0" stroke-width="1.2" fill="none"/><path d="M7 2H16M11.5 2V13M9.5 13H13.5" stroke="#1d85d0" stroke-width="1.4"/></svg>
<div style="left:552px;top:361px;width:1px;height:19px;background:#a0a0a0;"></div>
<svg style="left:557px;top:362px;" width="16" height="15" viewBox="0 0 16 15"><path d="M1 5V1H5M1 1L5 5M15 5V1H11M15 1L11 5M1 10V14H5M1 14L5 10M15 10V14H11M15 14L11 10" stroke="#707070" stroke-width="1.3" fill="none"/></svg>
<svg style="left:888px;top:363px;" width="9" height="14" viewBox="0 0 9 14"><path d="M1 1.5L8 7L1 12.5Z" fill="#6a6a6a"/></svg>
<div style="left:905px;top:361px;width:1px;height:19px;background:#8a8a8a;"></div>
<svg style="left:913px;top:367px;" width="10" height="6" viewBox="0 0 10 6"><path d="M0 0.5H10L5 5.5Z" fill="#707070"/></svg>
<svg style="left:935px;top:361px;" width="17" height="15" viewBox="0 0 17 15"><path d="M2 9L9 2L14 7L7 14Z" fill="#fff" stroke="#a8a8a8" stroke-width="1.5"/><path d="M4.5 11.5L2 9L5.5 5.5L10 10Z" fill="#a8a8a8"/><path d="M10 14H16" stroke="#a8a8a8" stroke-width="1.2"/></svg>
<svg style="left:957px;top:361px;" width="16" height="15" viewBox="0 0 16 15"><path d="M0.5 1H11.5L7.5 6V13L4.5 10.5V6Z" fill="none" stroke="#a8a8a8" stroke-width="1.3"/><rect x="10.5" y="9.5" width="5" height="5" fill="none" stroke="#a8a8a8"/></svg>
<svg style="left:981px;top:361px;" width="18" height="16" viewBox="0 0 18 16"><rect x="0.5" y="0.5" width="13" height="13" fill="#fff" stroke="#1d85d0" stroke-width="1.2"/><rect x="0.5" y="0.5" width="13" height="3" fill="#1d85d0"/><path d="M5 0V14M0 8H14" stroke="#1d85d0" stroke-width="1.2"/><rect x="1" y="4" width="4" height="9" fill="#56bdea"/></svg>
<svg style="left:990px;top:369px;" width="8" height="8" viewBox="0 0 8 8"><polygon points="6.80,3.33 7.72,3.44 7.72,4.56 6.80,4.67 6.46,5.50 7.02,6.23 6.23,7.02 5.50,6.46 4.67,6.80 4.56,7.72 3.44,7.72 3.33,6.80 2.50,6.46 1.77,7.02 0.98,6.23 1.54,5.50 1.20,4.67 0.28,4.56 0.28,3.44 1.20,3.33 1.54,2.50 0.98,1.77 1.77,0.98 2.50,1.54 3.33,1.20 3.44,0.28 4.56,0.28 4.67,1.20 5.50,1.54 6.23,0.98 7.02,1.77 6.46,2.50" fill="#1d85d0" stroke="#1d85d0" stroke-width="0.40" stroke-linejoin="round"/><circle cx="4.0" cy="4.0" r="2.82" fill="#1d85d0"/><rect x="2.72" y="2.72" width="2.56" height="2.56" fill="#6cc6f0" transform="rotate(45 4.0 4.0)"/></svg>
<svg style="left:1002px;top:362px;" width="2" height="16" viewBox="0 0 2 16"><rect x="0" y="0" width="2" height="2" fill="#b8ad9a"/><rect x="0" y="4" width="2" height="2" fill="#b8ad9a"/><rect x="0" y="8" width="2" height="2" fill="#b8ad9a"/><rect x="0" y="12" width="2" height="2" fill="#b8ad9a"/></svg>
<svg style="left:1013px;top:361px;" width="16" height="16" viewBox="0 0 16 16"><path d="M3 8A5 5 0 0 1 12 4.5M13 8A5 5 0 0 1 4 11.5" stroke="#1d85d0" stroke-width="2" fill="none"/><path d="M10 2L14 5L10 7Z" fill="#1d85d0"/><path d="M6 9L2 11L6 14Z" fill="#1d85d0"/></svg>
<svg style="left:1037px;top:366px;" width="10" height="6" viewBox="0 0 10 6"><path d="M0 0.3H9.6L4.8 5.5Z" fill="#000"/></svg>
<svg style="left:1052px;top:362px;" width="2" height="16" viewBox="0 0 2 16"><rect x="0" y="0" width="2" height="2" fill="#b8ad9a"/><rect x="0" y="4" width="2" height="2" fill="#b8ad9a"/><rect x="0" y="8" width="2" height="2" fill="#b8ad9a"/><rect x="0" y="12" width="2" height="2" fill="#b8ad9a"/></svg>
<svg style="left:1063px;top:362px;" width="16" height="12" viewBox="0 0 16 12"><path d="M16 6H5" stroke="#a8a8a8" stroke-width="3"/><path d="M7 0L0.5 6L7 12Z" fill="#a8a8a8"/></svg>
<svg style="left:1087px;top:366px;" width="10" height="6" viewBox="0 0 10 6"><path d="M0 0.5H10L5 5.5Z" fill="#888"/></svg>
<svg style="left:1105px;top:362px;" width="16" height="12" viewBox="0 0 16 12"><path d="M0 6H11" stroke="#a8a8a8" stroke-width="3"/><path d="M9 0L15.5 6L9 12Z" fill="#a8a8a8"/></svg>
<svg style="left:1129px;top:366px;" width="10" height="6" viewBox="0 0 10 6"><path d="M0 0.5H10L5 5.5Z" fill="#888"/></svg>
<div style="left:352px;top:386px;width:24px;height:96px;box-sizing:border-box;border:1px solid #b9b9b9;background:#e3e3e3;"></div>
<div class="t" style="left:364px;top:427px;width:0;height:0;"><div style="position:absolute;left:0;top:0;transform:translate(-50%,-50%) rotate(-90deg);font-size:15px;line-height:15px;white-space:nowrap;letter-spacing:0px">Таблица</div></div>
<svg style="left:355px;top:460px;" width="14" height="14" viewBox="0 0 14 14"><rect x="0.65" y="0.65" width="12.7" height="12.7" fill="#fff" stroke="#1d85d0" stroke-width="1.3"/><path d="M4.7 0V14" stroke="#1d85d0" stroke-width="1.3"/><path d="M9.3 0V14" stroke="#1d85d0" stroke-width="1.3"/><path d="M0 4.7H14" stroke="#1d85d0" stroke-width="1.3"/><path d="M0 9.3H14" stroke="#1d85d0" stroke-width="1.3"/></svg>
<div class="t" style="left:364px;top:512.5px;width:0;height:0;"><div style="position:absolute;left:0;top:0;transform:translate(-50%,-50%) rotate(-90deg);font-size:15px;line-height:15px;white-space:nowrap">Текст</div></div>
<svg style="left:354px;top:535px;" width="13" height="15" viewBox="0 0 13 15"><path d="M4 1.5H12M8 1.5V13M6 13H10" stroke="#1d85d0" stroke-width="1.3"/><path d="M3 5L0.8 7L3 9M3 10L1 12L3 14" stroke="#1d85d0" stroke-width="1" fill="none"/></svg>
<div class="t" style="left:364px;top:606.5px;width:0;height:0;"><div style="position:absolute;left:0;top:0;transform:translate(-50%,-50%) rotate(-90deg);font-size:15px;line-height:15px;white-space:nowrap">Запись</div></div>
<svg style="left:355px;top:635px;" width="16" height="16" viewBox="0 0 16 16"><path d="M1.5 6V14.5H12.5V8M1.5 6L4 3.5H8" stroke="#1d85d0" stroke-width="1.4" fill="none"/><circle cx="12" cy="4" r="3.5" fill="#1d85d0"/><path d="M10 4H14" stroke="#fff" stroke-width="1.2"/></svg>
<div style="left:377px;top:386px;width:522px;height:32px;background:#f0f0f0;"></div>
<div style="left:377px;top:418px;width:522px;height:215px;background:#ffffff;"></div>
<div style="left:378px;top:441px;width:29px;height:192px;background:#f0f0f0;"></div>
<svg style="left:382.5px;top:390px;" width="7" height="8" viewBox="0 0 7 8"><path d="M1.8 3.5V2.5A1.7 1.7 0 0 1 5.2 2.5V3.5" stroke="#f5b000" stroke-width="1.1" fill="none"/><rect x="0.3" y="3.3" width="6.4" height="4.5" fill="#f5b000"/></svg>
<div style="left:408px;top:386px;width:105px;height:32px;background:#7fb9e8;"></div>
<svg style="left:493px;top:392px;" width="19" height="16" viewBox="0 0 19 16"><path d="M1 1.5H10L6.8 5.5V13.5L4.2 11V5.5Z" fill="#a8d4f5" stroke="#2a8ad4" stroke-width="1"/><path d="M15 2V6.5M15 9V14" stroke="#2a8ad4" stroke-width="1.5"/><path d="M12.3 4.5L15 1.3L17.7 4.5Z" fill="#2a8ad4"/><path d="M12.3 11.5L15 14.7L17.7 11.5Z" fill="#2a8ad4"/></svg>
<div style="left:378px;top:418px;width:29px;height:23px;background:#7fb9e8;"></div>
<div style="left:407px;top:418px;width:106px;height:23px;background:#000;"></div>
<div style="left:408px;top:419px;width:104px;height:21px;background:#4a74a0;"></div>
<div style="left:408.6px;top:419.5px;width:103px;height:20px;background:#6ba7dd;"></div>
<div style="left:407px;top:386px;width:1px;height:247px;background:#000;"></div>
<div style="left:408px;top:465px;width:491px;height:1px;background:#ebebeb;"></div>
<div style="left:378px;top:465px;width:29px;height:1px;background:#000;"></div>
<div style="left:408px;top:489px;width:491px;height:1px;background:#ebebeb;"></div>
<div style="left:378px;top:489px;width:29px;height:1px;background:#000;"></div>
<div style="left:408px;top:513px;width:491px;height:1px;background:#ebebeb;"></div>
<div style="left:378px;top:513px;width:29px;height:1px;background:#000;"></div>
<div style="left:408px;top:537px;width:491px;height:1px;background:#ebebeb;"></div>
<div style="left:378px;top:537px;width:29px;height:1px;background:#000;"></div>
<div style="left:408px;top:561px;width:491px;height:1px;background:#ebebeb;"></div>
<div style="left:378px;top:561px;width:29px;height:1px;background:#000;"></div>
<div style="left:408px;top:585px;width:491px;height:1px;background:#ebebeb;"></div>
<div style="left:378px;top:585px;width:29px;height:1px;background:#000;"></div>
<div style="left:408px;top:609px;width:491px;height:1px;background:#ebebeb;"></div>
<div style="left:378px;top:609px;width:29px;height:1px;background:#000;"></div>
<div style="left:378px;top:441px;width:29px;height:1px;background:#000;"></div>
<div style="left:513px;top:442px;width:1px;height:191px;background:#ebebeb;"></div>
<div style="left:513px;top:386px;width:1px;height:32px;background:#c8c8c8;"></div>
<svg style="left:515px;top:372px;" width="140" height="70" viewBox="0 0 140 70"><defs><filter id="blr" x="-20%" y="-50%" width="140%" height="200%"><feGaussianBlur stdDeviation="1.3"/></filter></defs><g transform="translate(1.5,3)" opacity="0.55" filter="url(#blr)"><path d="M127 10.5L25 51" stroke="#444" stroke-width="3.6" stroke-linecap="round"/><path d="M17 55L27.5 45L31 56Z" fill="#444"/></g><path d="M127 10.5L25 51" stroke="#ec3b41" stroke-width="3.6" stroke-linecap="round"/><path d="M17 55L27 45.5L31 56.5Z" fill="#ec3b41" stroke="#ec3b41" stroke-width="1" stroke-linejoin="round"/></svg>
<svg style="left:903px;top:385px;" width="120" height="25" viewBox="0 0 120 25"><path d="M1 1.5H114Q118.5 1.5 118.5 6V24.5" fill="none" stroke="#b4b4b4" stroke-width="1"/></svg>
<div style="left:1021px;top:409px;width:107px;height:1px;background:#b4b4b4;"></div>
<svg style="left:908px;top:391px;" width="15" height="14" viewBox="0 0 15 14"><rect x="0.6" y="0.6" width="12.5" height="12" fill="#fff" stroke="#0a84d0" stroke-width="1.2"/><rect x="0.6" y="0.6" width="12.5" height="2" fill="#0a84d0"/><rect x="1.5" y="2.5" width="6.5" height="5" fill="#6cc6f0"/><path d="M0.6 7.8H8M8 2.5V8" stroke="#0a84d0" stroke-width="1.1"/><rect x="9" y="8" width="6" height="6" fill="#f0f0f0"/><path d="M10 11.5H14M10 9.5V13.5M14 9.5V13.5" stroke="#0a84d0" stroke-width="1"/></svg>
<svg style="left:1003px;top:394px;" width="10" height="10" viewBox="0 0 10 10"><path d="M0.5 0.5L9.5 9.5M9.5 0.5L0.5 9.5" stroke="#555" stroke-width="1.2"/></svg>
<svg style="left:1087px;top:393px;" width="12" height="7" viewBox="0 0 12 7"><path d="M1 1H11L6 6Z" fill="none" stroke="#777" stroke-width="1"/></svg>
<svg style="left:1108px;top:392px;" width="10" height="5" viewBox="0 0 10 5"><rect x="0.5" y="0.5" width="9" height="4" fill="#fff" stroke="#6b6b6b"/></svg>
<div style="left:1130px;top:386px;width:24px;height:80px;box-sizing:border-box;border:1px solid #b4b4b4;background:#e3e3e3;"></div>
<svg style="left:1135px;top:394px;" width="17" height="16" viewBox="0 0 17 16"><rect x="2.5" y="0.5" width="14" height="13" fill="#fff" stroke="#0a84d0" stroke-width="1"/><rect x="2.5" y="0.5" width="14" height="2" fill="#0a84d0"/><rect x="8" y="2" width="5" height="7" fill="#6cc6f0"/><rect x="13" y="2" width="3.5" height="11.5" fill="#0a84d0"/><path d="M8 9.5H16" stroke="#0a84d0" stroke-width="1"/></svg>
<svg style="left:1135px;top:403px;" width="7" height="7" viewBox="0 0 7 7"><polygon points="5.95,2.91 6.75,3.01 6.75,3.99 5.95,4.09 5.65,4.82 6.15,5.45 5.45,6.15 4.82,5.65 4.09,5.95 3.99,6.75 3.01,6.75 2.91,5.95 2.18,5.65 1.55,6.15 0.85,5.45 1.35,4.82 1.05,4.09 0.25,3.99 0.25,3.01 1.05,2.91 1.35,2.18 0.85,1.55 1.55,0.85 2.18,1.35 2.91,1.05 3.01,0.25 3.99,0.25 4.09,1.05 4.82,1.35 5.45,0.85 6.15,1.55 5.65,2.18" fill="#0a84d0" stroke="#0a84d0" stroke-width="0.35" stroke-linejoin="round"/><circle cx="3.5" cy="3.5" r="2.47" fill="#0a84d0"/><rect x="2.38" y="2.38" width="2.24" height="2.24" fill="#6cc6f0" transform="rotate(45 3.5 3.5)"/></svg>
<div class="t" style="left:1141px;top:431px;width:0;height:0;"><div style="position:absolute;left:0;top:0;transform:translate(-50%,-50%) rotate(90deg);font-size:13.3px;line-height:15px;white-space:nowrap">Panels</div></div>
<svg style="left:1132px;top:471px;" width="14" height="14" viewBox="0 0 14 14"><circle cx="7" cy="7" r="6" fill="none" stroke="#1d85d0" stroke-width="1.3"/><circle cx="5" cy="5" r="1.1" fill="#1d85d0"/><circle cx="9" cy="5" r="1.1" fill="#1d85d0"/><circle cx="5" cy="9" r="1.1" fill="#1d85d0"/><circle cx="9" cy="9" r="1.1" fill="#1d85d0"/></svg>
<div style="left:1131px;top:490px;width:19px;height:20px;box-sizing:border-box;border:1px solid #a0a0a0;background:#dadada;"></div>
<svg style="left:1133px;top:493px;" width="15" height="14" viewBox="0 0 15 14"><rect x="0.6" y="0.6" width="12.5" height="12" fill="#fff" stroke="#0a84d0" stroke-width="1.2"/><rect x="0.6" y="0.6" width="12.5" height="2" fill="#0a84d0"/><rect x="1.5" y="2.5" width="6.5" height="5" fill="#6cc6f0"/><path d="M0.6 7.8H8M8 2.5V8" stroke="#0a84d0" stroke-width="1.1"/><rect x="9" y="8" width="6" height="6" fill="#dadada"/><path d="M10 11.5H14M10 9.5V13.5M14 9.5V13.5" stroke="#0a84d0" stroke-width="1"/></svg>
<svg style="left:1133px;top:515px;" width="14" height="14" viewBox="0 0 14 14"><rect x="0.5" y="0.5" width="13" height="13" fill="#fff" stroke="#1d85d0"/><rect x="1" y="1" width="2" height="2" fill="#1d85d0"/><rect x="1" y="5" width="2" height="2" fill="#1d85d0"/><rect x="1" y="9" width="2" height="2" fill="#1d85d0"/><rect x="3" y="3" width="2" height="2" fill="#1d85d0"/><rect x="3" y="7" width="2" height="2" fill="#1d85d0"/><rect x="3" y="11" width="2" height="2" fill="#1d85d0"/><rect x="5" y="1" width="2" height="2" fill="#1d85d0"/><rect x="5" y="5" width="2" height="2" fill="#1d85d0"/><rect x="5" y="9" width="2" height="2" fill="#1d85d0"/><rect x="7" y="3" width="2" height="2" fill="#1d85d0"/><rect x="7" y="7" width="2" height="2" fill="#1d85d0"/><rect x="7" y="11" width="2" height="2" fill="#1d85d0"/><rect x="9" y="1" width="2" height="2" fill="#1d85d0"/><rect x="9" y="5" width="2" height="2" fill="#1d85d0"/><rect x="9" y="9" width="2" height="2" fill="#1d85d0"/><rect x="11" y="3" width="2" height="2" fill="#1d85d0"/><rect x="11" y="7" width="2" height="2" fill="#1d85d0"/><rect x="11" y="11" width="2" height="2" fill="#1d85d0"/></svg>
<svg style="left:1132px;top:536px;" width="15" height="16" viewBox="0 0 15 16"><rect x="0.5" y="4.5" width="14" height="11" fill="#fff" stroke="#1d85d0"/><path d="M0.5 8H14.5M0.5 11.5H14.5M5 4.5V15.5M10 4.5V15.5" stroke="#1d85d0" stroke-width="1"/><path d="M7.5 0V7" stroke="#f08a1a" stroke-width="1.6"/><rect x="5" y="5" width="5" height="10" fill="#f08a1a" opacity="0.8"/></svg>
<svg style="left:1132px;top:557px;" width="15" height="15" viewBox="0 0 15 15"><circle cx="3.5" cy="3.5" r="3" fill="#1d85d0"/><circle cx="11" cy="3.5" r="3" fill="#1d85d0"/><circle cx="3.5" cy="11" r="3" fill="none" stroke="#1d85d0"/><circle cx="11" cy="11" r="3" fill="#f08a1a"/><path d="M2 3.5H5M9.5 3.5H12.5M2 9.5L5 12.5M5 9.5L2 12.5M9.5 10.5H12.5M9.5 12H12.5" stroke="#fff" stroke-width="0.9"/></svg>
<svg style="left:384px;top:638px;" width="17" height="17" viewBox="0 0 17 17"><circle cx="8.5" cy="8.5" r="7.5" fill="none" stroke="#a8a8a8" stroke-width="1.3"/><path d="M5 8.5L7.5 11L12 6" stroke="#a8a8a8" stroke-width="1.3" fill="none"/></svg>
<svg style="left:447px;top:639px;" width="14" height="14" viewBox="0 0 14 14"><rect x="0.5" y="0.5" width="13" height="13" fill="none" stroke="#a8a8a8"/><path d="M3.5 3.5L10.5 10.5M10.5 3.5L3.5 10.5" stroke="#a8a8a8" stroke-width="1.1"/></svg>
<svg style="left:521px;top:638px;" width="16" height="16" viewBox="0 0 16 16"><path d="M3 1.5H13.5V13M1.5 14.5H11V4" stroke="#a8a8a8" stroke-width="2" fill="none"/><circle cx="7.5" cy="9" r="2.6" fill="none" stroke="#a8a8a8" stroke-width="1.5"/></svg>
<div style="left:590px;top:637px;width:1px;height:21px;background:#8a8a8a;"></div>
<svg style="left:600px;top:640px;" width="15" height="13" viewBox="0 0 15 13"><path d="M0 1H13M0 5H11M0 9H6M0 12.5H5" stroke="#1d85d0" stroke-width="1.6"/><path d="M8 12L13 7" stroke="#1d85d0" stroke-width="2"/></svg>
<svg style="left:624px;top:640px;" width="15" height="13" viewBox="0 0 15 13"><path d="M0 1H13M0 5H9M0 9H6M0 12.5H6" stroke="#999" stroke-width="1.6"/><path d="M8 9.5H15M11.5 6V13" stroke="#999" stroke-width="1.6"/></svg>
<svg style="left:648px;top:640px;" width="15" height="13" viewBox="0 0 15 13"><path d="M0 1H13M0 5H3M0 9H3M0 12.5H3" stroke="#999" stroke-width="1.6"/><circle cx="10" cy="8.5" r="4" fill="none" stroke="#999" stroke-width="1.1"/><path d="M8 8.5H12M10 6.5V10.5" stroke="#999" stroke-width="1"/></svg>
<svg style="left:672px;top:640px;" width="15" height="13" viewBox="0 0 15 13"><path d="M0 1H13M0 5H6M0 9H6M0 12.5H6M8 9.5H15" stroke="#999" stroke-width="1.6"/></svg>
<svg style="left:695px;top:638px;" width="2" height="16" viewBox="0 0 2 16"><rect x="0" y="0" width="2" height="2" fill="#b8ad9a"/><rect x="0" y="4" width="2" height="2" fill="#b8ad9a"/><rect x="0" y="8" width="2" height="2" fill="#b8ad9a"/><rect x="0" y="12" width="2" height="2" fill="#b8ad9a"/></svg>
<svg style="left:704px;top:640px;" width="12" height="14" viewBox="0 0 12 14"><path d="M1 0V14" stroke="#888" stroke-width="1.5"/><path d="M10 1L4 7L10 13" stroke="#888" stroke-width="1.5" fill="none"/></svg>
<svg style="left:731px;top:640px;" width="9" height="14" viewBox="0 0 9 14"><path d="M7 1L1.5 7L7 13" stroke="#888" stroke-width="1.5" fill="none"/></svg>
<svg style="left:755px;top:640px;" width="9" height="14" viewBox="0 0 9 14"><path d="M2 1L7.5 7L2 13" stroke="#888" stroke-width="1.5" fill="none"/></svg>
<svg style="left:776px;top:640px;" width="12" height="14" viewBox="0 0 12 14"><path d="M11 0V14" stroke="#888" stroke-width="1.5"/><path d="M2 1L8 7L2 13" stroke="#888" stroke-width="1.5" fill="none"/></svg>
<div style="left:794px;top:637px;width:1px;height:21px;background:#8a8a8a;"></div>
<svg style="left:803px;top:639px;" width="16" height="15" viewBox="0 0 16 15"><path d="M2 5V12H8" stroke="#a8a8a8" stroke-width="1.2" fill="none"/><path d="M6 9.5L8.5 12L6 14.5" stroke="#a8a8a8" stroke-width="1.2" fill="none"/><path d="M9.5 1.5H13L15 3.5V9H9.5Z" fill="none" stroke="#a8a8a8" stroke-width="1.1"/></svg>
<svg style="left:825px;top:639px;" width="16" height="16" viewBox="0 0 16 16"><path d="M1 4V1H4M12 1H15V4M15 12V15H12M4 15H1V12" stroke="#a8a8a8" stroke-width="1.2" fill="none"/><path d="M5 3.5H10L11.5 5V12.5H5Z" fill="none" stroke="#a8a8a8" stroke-width="1.1"/></svg>
<svg style="left:850px;top:638px;" width="2" height="16" viewBox="0 0 2 16"><rect x="0" y="0" width="2" height="2" fill="#b8ad9a"/><rect x="0" y="4" width="2" height="2" fill="#b8ad9a"/><rect x="0" y="8" width="2" height="2" fill="#b8ad9a"/><rect x="0" y="12" width="2" height="2" fill="#b8ad9a"/></svg>
<svg style="left:860px;top:638px;" width="14" height="16" viewBox="0 0 14 16"><path d="M7 12V2M3 5.5L7 1.5L11 5.5" stroke="#1d85d0" stroke-width="1.8" fill="none"/><path d="M1 10V14.5H13V10" stroke="#1d85d0" stroke-width="1.6" fill="none"/></svg>
<svg style="left:883px;top:638px;" width="2" height="16" viewBox="0 0 2 16"><rect x="0" y="0" width="2" height="2" fill="#b8ad9a"/><rect x="0" y="4" width="2" height="2" fill="#b8ad9a"/><rect x="0" y="8" width="2" height="2" fill="#b8ad9a"/><rect x="0" y="12" width="2" height="2" fill="#b8ad9a"/></svg>
<svg style="left:891px;top:639px;" width="15" height="15" viewBox="0 0 15 15"><polygon points="12.75,6.24 14.47,6.45 14.47,8.55 12.75,8.76 12.10,10.32 13.17,11.69 11.69,13.17 10.32,12.10 8.76,12.75 8.55,14.47 6.45,14.47 6.24,12.75 4.68,12.10 3.31,13.17 1.83,11.69 2.90,10.32 2.25,8.76 0.53,8.55 0.53,6.45 2.25,6.24 2.90,4.68 1.83,3.31 3.31,1.83 4.68,2.90 6.24,2.25 6.45,0.53 8.55,0.53 8.76,2.25 10.32,2.90 11.69,1.83 13.17,3.31 12.10,4.68" fill="#1d85d0" stroke="#1d85d0" stroke-width="0.75" stroke-linejoin="round"/><circle cx="7.5" cy="7.5" r="5.29" fill="#1d85d0"/><rect x="5.10" y="5.10" width="4.80" height="4.80" fill="#6cc6f0" transform="rotate(45 7.5 7.5)"/></svg>
<div style="left:913px;top:633px;width:59px;height:26px;box-sizing:border-box;border:1px solid #7a7a7a;background:#ffffff;"></div>
<svg style="left:978px;top:637.5px;" width="18" height="16" viewBox="0 0 18 16"><path d="M3 8V6Q3 3.5 5.5 3.5H13M15 8V10Q15 12.5 12.5 12.5H5" stroke="#1ea83c" stroke-width="2.2" fill="none"/><path d="M12 0L16 3.5L12 7Z" fill="#1ea83c"/><path d="M6 9L2 12.5L6 16Z" fill="#1ea83c"/></svg>
<svg style="left:1020px;top:638px;" width="2" height="16" viewBox="0 0 2 16"><rect x="0" y="0" width="2" height="2" fill="#b8ad9a"/><rect x="0" y="4" width="2" height="2" fill="#b8ad9a"/><rect x="0" y="8" width="2" height="2" fill="#b8ad9a"/><rect x="0" y="12" width="2" height="2" fill="#b8ad9a"/></svg>
<svg style="left:387px;top:666px;" width="15" height="16" viewBox="0 0 15 16"><path d="M1 4V12M5 1H3V15H5" stroke="#1d85d0" stroke-width="1.2" fill="none"/><rect x="5" y="4.5" width="9" height="7" fill="#56bdea" stroke="#1d85d0" stroke-width="1"/></svg>
<svg style="left:1133px;top:666px;" width="16" height="16" viewBox="0 0 16 16"><rect x="1" y="3" width="4" height="12" fill="#1d85d0"/><path d="M8 2H12Q14 2 14 5V12M11 9L14 12L17 9" stroke="#1d85d0" stroke-width="1.6" fill="none"/><path d="M7 15H14" stroke="#1d85d0" stroke-width="1.6"/></svg>
<div style="left:349px;top:684px;width:806px;height:1px;background:#d6d6d6;"></div>
<div style="left:0px;top:685px;width:1155px;height:26px;background:#f0f0f0;"></div>
<div style="left:268px;top:686px;width:1px;height:21px;background:#a8a8a8;"></div>
<div style="left:312px;top:686px;width:1px;height:21px;background:#a8a8a8;"></div>
<div style="left:339px;top:686px;width:1px;height:21px;background:#a8a8a8;"></div>
<div style="left:513px;top:686px;width:1px;height:21px;background:#a8a8a8;"></div>
<div style="left:679px;top:686px;width:1px;height:21px;background:#a8a8a8;"></div>
<svg style="left:800px;top:690px;" width="2" height="16" viewBox="0 0 2 16"><rect x="0" y="0" width="2" height="2" fill="#c0c0c0"/><rect x="0" y="4" width="2" height="2" fill="#c0c0c0"/><rect x="0" y="8" width="2" height="2" fill="#c0c0c0"/><rect x="0" y="12" width="2" height="2" fill="#c0c0c0"/></svg>
<div style="left:0px;top:711px;width:1155px;height:2px;background:#c9c9c9;"></div>
<div style="left:0px;top:711px;width:329px;height:2px;background:#c3d0b5;"></div>
<div style="left:329px;top:711px;width:20px;height:2px;background:#a9ad6c;"></div>
<div style="left:791px;top:711px;width:364px;height:2px;background:#808282;"></div>
<div class="t" style="left:34px;top:11.30px;font-size:15px;line-height:15px;color:#a3a3a3;font-weight:normal;font-style:normal;font-family:'Liberation Sans';letter-spacing:-0.038px;">DBeaver 21.3.2 - &lt;t5-prostore-01.ru-central1.internal&gt; Script-7</div>
<div class="t" style="left:6px;top:42.30px;font-size:15px;line-height:15px;color:#6a6a6a;font-weight:normal;font-style:normal;font-family:'Liberation Sans';letter-spacing:-0.469px;">Файл</div>
<div class="t" style="left:56.6px;top:42.30px;font-size:15px;line-height:15px;color:#6a6a6a;font-weight:normal;font-style:normal;font-family:'Liberation Sans';letter-spacing:-0.090px;">Редактирование</div>
<div class="t" style="left:184.7px;top:42.30px;font-size:15px;line-height:15px;color:#6a6a6a;font-weight:normal;font-style:normal;font-family:'Liberation Sans';letter-spacing:-0.011px;">Навигация</div>
<div class="t" style="left:275px;top:42.30px;font-size:15px;line-height:15px;color:#6a6a6a;font-weight:normal;font-style:normal;font-family:'Liberation Sans';letter-spacing:0.087px;">Поиск</div>
<div class="t" style="left:331.8px;top:42.30px;font-size:15px;line-height:15px;color:#6a6a6a;font-weight:normal;font-style:normal;font-family:'Liberation Sans';letter-spacing:-0.563px;">Редактор SQL</div>
<div class="t" style="left:439px;top:42.30px;font-size:15px;line-height:15px;color:#6a6a6a;font-weight:normal;font-style:normal;font-family:'Liberation Sans';letter-spacing:-0.250px;">База данных</div>
<div class="t" style="left:540px;top:42.30px;font-size:15px;line-height:15px;color:#6a6a6a;font-weight:normal;font-style:normal;font-family:'Liberation Sans';letter-spacing:-0.214px;">Окна</div>
<div class="t" style="left:588.8px;top:42.30px;font-size:15px;line-height:15px;color:#6a6a6a;font-weight:normal;font-style:normal;font-family:'Liberation Sans';letter-spacing:-0.263px;">Справка</div>
<div class="t" style="left:168px;top:72.30px;font-size:15px;line-height:15px;color:#000;font-weight:normal;font-style:normal;font-family:'Liberation Sans';letter-spacing:-1.338px;">SQL</div>
<div class="t" style="left:252px;top:72.30px;font-size:15px;line-height:15px;color:#a2a2a2;font-weight:normal;font-style:normal;font-family:'Liberation Sans';letter-spacing:0.056px;">Commit</div>
<div class="t" style="left:335px;top:72.30px;font-size:15px;line-height:15px;color:#a2a2a2;font-weight:normal;font-style:normal;font-family:'Liberation Sans';letter-spacing:-0.191px;">Rollback</div>
<div class="t" style="left:474px;top:73.30px;font-size:15px;line-height:15px;color:#000;font-weight:normal;font-style:normal;font-family:'Liberation Sans';letter-spacing:0.036px;">Auto</div>
<div class="t" style="left:579px;top:72.30px;font-size:15px;line-height:15px;color:#000;font-weight:normal;font-style:normal;font-family:'Liberation Sans';letter-spacing:-0.048px;">t5-prostore-01 ... tral1.internal</div>
<div class="t" style="left:834.5px;top:72.30px;font-size:15px;line-height:15px;color:#000;font-weight:normal;font-style:normal;font-family:'Liberation Sans';letter-spacing:0.163px;">&lt; N/A &gt;</div>
<div class="t" style="left:24px;top:105.30px;font-size:15px;line-height:15px;color:#000;font-weight:normal;font-style:normal;font-family:'Liberation Sans';letter-spacing:-0.072px;">Базы данных</div>
<div class="t" style="left:164px;top:105.30px;font-size:15px;line-height:15px;color:#000;font-weight:normal;font-style:normal;font-family:'Liberation Sans';letter-spacing:-0.170px;">Проекты</div>
<div class="t" style="left:6px;top:153.30px;font-size:15px;line-height:15px;color:#777777;font-weight:normal;font-style:normal;font-family:'Liberation Sans';letter-spacing:-0.053px;">Введите часть имени объекта для поиска</div>
<div class="t" style="left:44px;top:177.30px;font-size:15px;line-height:15px;color:#000;font-weight:normal;font-style:normal;font-family:'Liberation Sans';letter-spacing:-0.274px;">DBeaver Sample Database (SQLite)</div>
<div class="t" style="left:44px;top:200.30px;font-size:15px;line-height:15px;color:#000;font-weight:normal;font-style:normal;font-family:'Liberation Sans';letter-spacing:0.016px;">t5-prostore-01.ru-central1.internal</div>
<div class="t" style="left:278px;top:200.30px;font-size:15px;line-height:15px;color:#7d7d7d;font-weight:normal;font-style:italic;font-family:'Liberation Sans';width:66px;overflow:hidden;">- t5-prosto</div>
<div class="t" style="left:24px;top:519.30px;font-size:15px;line-height:15px;color:#000;font-weight:normal;font-style:normal;font-family:'Liberation Sans';letter-spacing:-0.258px;">Project - General</div>
<div class="t" style="left:6.5px;top:545.80px;font-size:15px;line-height:15px;color:#000;font-weight:normal;font-style:normal;font-family:'Liberation Sans';letter-spacing:-0.253px;">Name</div>
<div class="t" style="left:258px;top:545.80px;font-size:15px;line-height:15px;color:#000;font-weight:normal;font-style:normal;font-family:'Liberation Sans';letter-spacing:-0.421px;">DataSource</div>
<div class="t" style="left:44.5px;top:569.80px;font-size:15px;line-height:15px;color:#000;font-weight:normal;font-style:normal;font-family:'Liberation Sans';letter-spacing:-0.336px;">Bookmarks</div>
<div class="t" style="left:44.5px;top:592.80px;font-size:15px;line-height:15px;color:#000;font-weight:normal;font-style:normal;font-family:'Liberation Sans';letter-spacing:-0.472px;">ER Diagrams</div>
<div class="t" style="left:44.5px;top:616.00px;font-size:15px;line-height:15px;color:#000;font-weight:normal;font-style:normal;font-family:'Liberation Sans';letter-spacing:-0.406px;">Scripts</div>
<div class="t" style="left:373.3px;top:105.30px;font-size:15px;line-height:15px;color:#000;font-weight:normal;font-style:normal;font-family:'Liberation Sans';letter-spacing:0.152px;">*&lt;none&gt; Script-6</div>
<div class="t" style="left:539px;top:105.30px;font-size:15px;line-height:15px;color:#000;font-weight:normal;font-style:normal;font-family:'Liberation Sans';letter-spacing:0.002px;">*&lt;t5-prostore-0...</div>
<div class="t" style="left:707.7px;top:105.30px;font-size:15px;line-height:15px;color:#000;font-weight:normal;font-style:normal;font-family:'Liberation Sans';letter-spacing:-0.208px;">demo_view</div>
<div class="t" style="left:832px;top:105.30px;font-size:15px;line-height:15px;color:#000;font-weight:normal;font-style:normal;font-family:'Liberation Sans';letter-spacing:0.159px;">gibdd_db</div>
<div class="t" style="left:944.5px;top:105.30px;font-size:15px;line-height:15px;color:#000;font-weight:normal;font-style:normal;font-family:'Liberation Sans';letter-spacing:-0.377px;">exload_4994de80...</div>
<div class="t" style="left:374.8px;top:336.30px;font-size:15px;line-height:15px;color:#000;font-weight:normal;font-style:normal;font-family:'Liberation Sans';letter-spacing:-0.430px;">Результат 1</div>
<div class="t" style="left:502px;top:336.30px;font-size:15px;line-height:15px;color:#000;font-weight:normal;font-style:normal;font-family:'Liberation Sans';letter-spacing:-0.421px;">Результат...</div>
<div class="t" style="left:375px;top:365.73px;font-size:14.5px;line-height:14.5px;color:#2f962f;font-weight:normal;font-style:normal;font-family:'Liberation Sans';letter-spacing:-0.700px;width:173px;overflow:hidden;">SELECT COUNT(*) FROM test</div>
<div class="t" style="left:578.5px;top:365.65px;font-size:14px;line-height:14px;color:#a3a3a3;font-weight:normal;font-style:italic;font-family:'Liberation Sans';letter-spacing:0.050px;width:306px;overflow:hidden;">Введите SQL выражение чтобы отфильтровать</div>
<div class="t" style="left:0px;top:-12.70px;font-size:15px;line-height:15px;color:#000;font-weight:normal;font-style:normal;font-family:'Liberation Sans';"></div>
<div class="t" style="left:414px;top:394.11px;font-size:10.5px;line-height:10.5px;color:#1a8ad4;font-weight:normal;font-style:normal;font-family:'Liberation Sans';letter-spacing:-0.506px;">123</div>
<div class="t" style="left:433.4px;top:395.65px;font-size:14px;line-height:14px;color:#000;font-weight:normal;font-style:normal;font-family:'Liberation Sans';letter-spacing:-0.620px;">EXPR$0</div>
<div class="t" style="left:383.4px;top:422.10px;font-size:15px;line-height:15px;color:#000;font-weight:bold;font-style:normal;font-family:'Liberation Sans';">1</div>
<div class="t" style="left:499.6px;top:421.80px;font-size:15px;line-height:15px;color:#ffffff;font-weight:normal;font-style:normal;font-family:'Liberation Sans';">0</div>
<div class="t" style="left:928px;top:391.30px;font-size:15px;line-height:15px;color:#000;font-weight:normal;font-style:normal;font-family:'Liberation Sans';letter-spacing:-0.065px;">Значение</div>
<div class="t" style="left:908px;top:413.30px;font-size:15px;line-height:15px;color:#000;font-weight:normal;font-style:normal;font-family:'Liberation Sans';">0</div>
<div class="t" style="left:404.5px;top:638.60px;font-size:15px;line-height:15px;color:#a2a2a2;font-weight:normal;font-style:normal;font-family:'Liberation Sans';letter-spacing:-1.172px;">Save</div>
<div class="t" style="left:466.7px;top:638.60px;font-size:15px;line-height:15px;color:#a2a2a2;font-weight:normal;font-style:normal;font-family:'Liberation Sans';letter-spacing:-0.899px;">Cancel</div>
<div class="t" style="left:541.5px;top:638.60px;font-size:15px;line-height:15px;color:#a2a2a2;font-weight:normal;font-style:normal;font-family:'Liberation Sans';letter-spacing:-0.174px;">Script</div>
<div class="t" style="left:920px;top:638.30px;font-size:15px;line-height:15px;color:#000;font-weight:normal;font-style:normal;font-family:'Liberation Sans';letter-spacing:0.658px;">200</div>
<div class="t" style="left:1004px;top:638.30px;font-size:15px;line-height:15px;color:#000;font-weight:normal;font-style:normal;font-family:'Liberation Sans';">1</div>
<div class="t" style="left:1030px;top:638.93px;font-size:14.5px;line-height:14.5px;color:#000;font-weight:normal;font-style:normal;font-family:'Liberation Sans';letter-spacing:-0.483px;">Rows: 1</div>
<div class="t" style="left:410px;top:666.30px;font-size:15px;line-height:15px;color:#000;font-weight:normal;font-style:normal;font-family:'Liberation Sans';letter-spacing:-0.021px;">1 строк получено - 47ms</div>
<div class="t" style="left:276px;top:689.30px;font-size:15px;line-height:15px;color:#000;font-weight:normal;font-style:normal;font-family:'Liberation Sans';letter-spacing:-0.835px;">MSK</div>
<div class="t" style="left:320px;top:689.30px;font-size:15px;line-height:15px;color:#000;font-weight:normal;font-style:normal;font-family:'Liberation Sans';letter-spacing:-0.669px;">ru</div>
<div class="t" style="left:347px;top:689.30px;font-size:15px;line-height:15px;color:#000;font-weight:normal;font-style:normal;font-family:'Liberation Sans';letter-spacing:-0.203px;">Запись</div>
<div class="t" style="left:521px;top:689.30px;font-size:15px;line-height:15px;color:#000;font-weight:normal;font-style:normal;font-family:'Liberation Sans';letter-spacing:-0.096px;">Инт. вставка</div>
<div class="t" style="left:688px;top:689.30px;font-size:15px;line-height:15px;color:#000;font-weight:normal;font-style:normal;font-family:'Liberation Sans';letter-spacing:-0.520px;">1 : 49 : 48</div>
</body></html>
